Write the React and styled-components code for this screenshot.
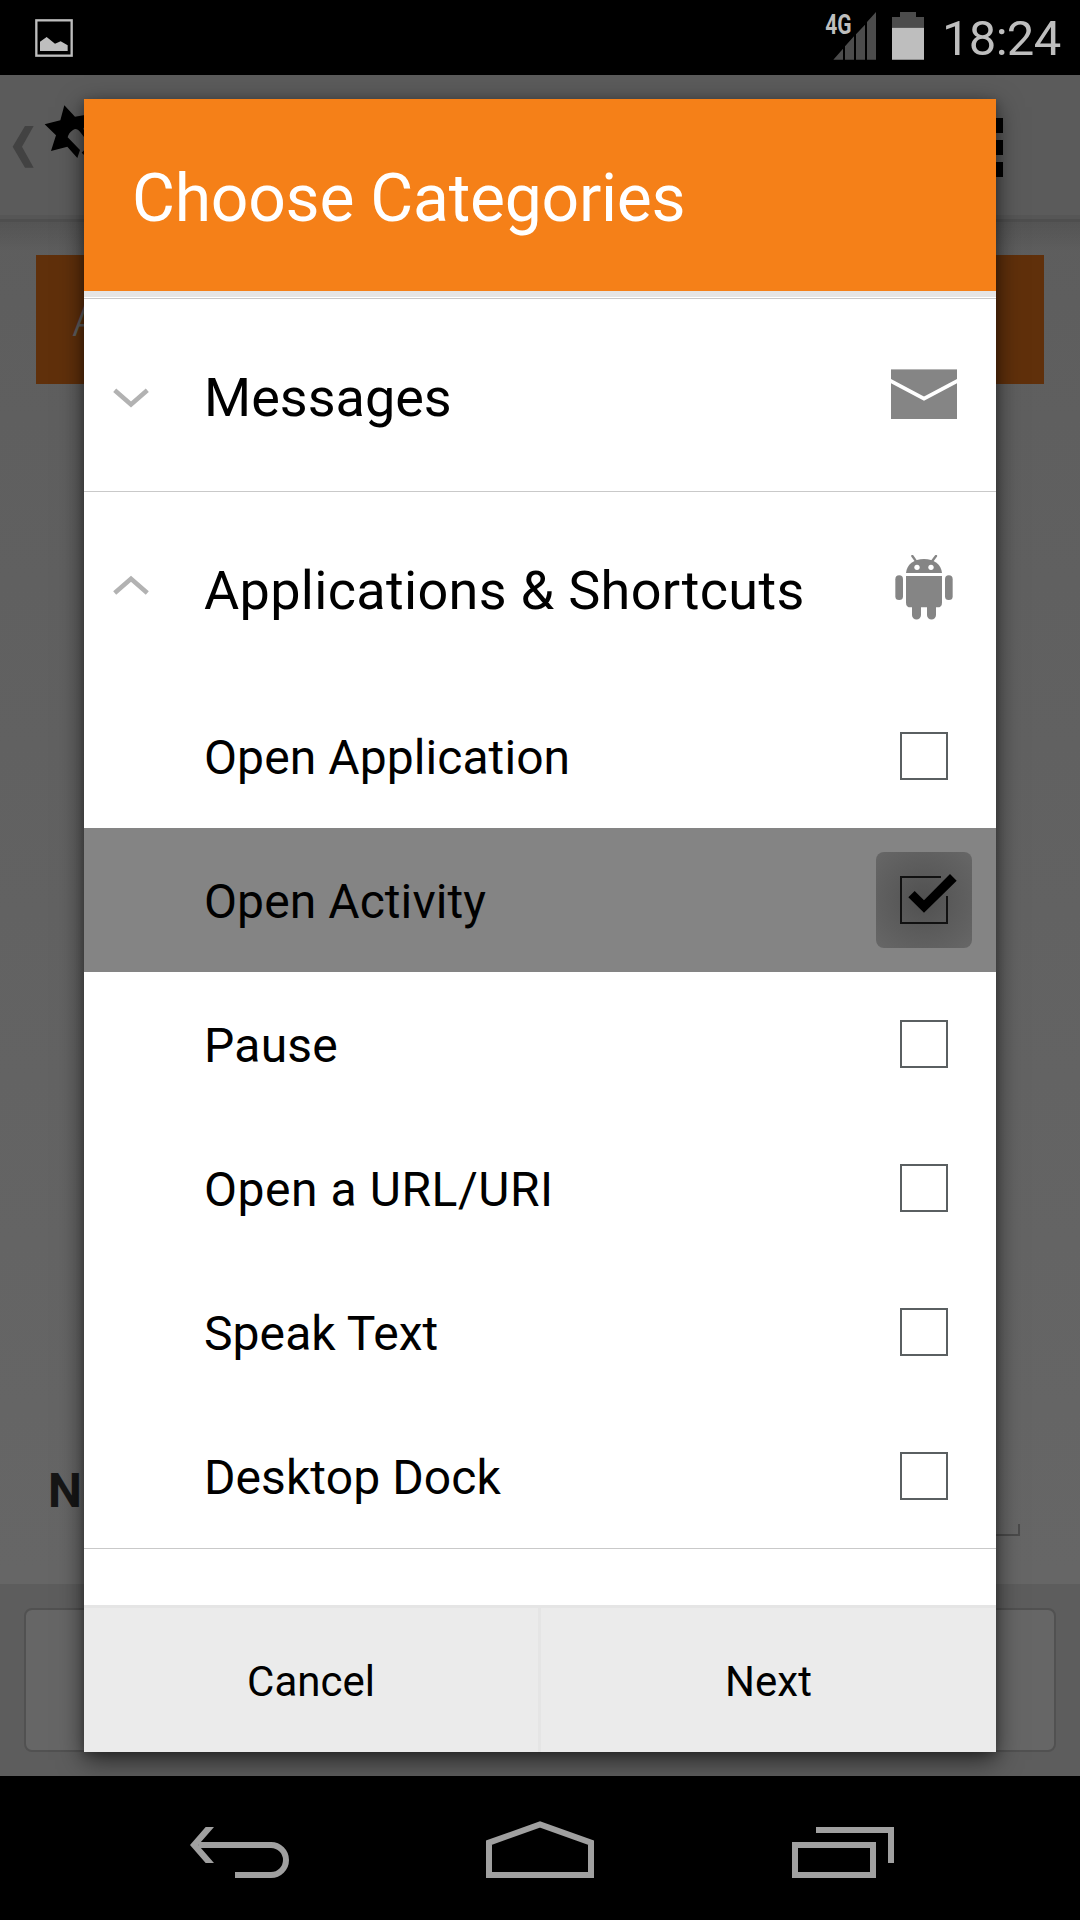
import React from "react";
import styled, { createGlobalStyle } from "styled-components";

const GlobalStyle = createGlobalStyle`
  *, *::before, *::after { box-sizing: border-box; }
  body { margin: 0; background: #000; font-family: Roboto, "Noto Sans", sans-serif; }
  button { font-family: inherit; border: 0; padding: 0; background: none; }
  svg { display: block; flex: none; }
`;

const Screen = styled.div`
  width: 1080px;
  height: 1920px;
  display: flex;
  flex-direction: column;
  background: #000;
  overflow: hidden;
`;

const StatusBar = styled.header`
  flex: none;
  height: 75px;
  padding: 0 19px 0 35px;
  display: flex;
  align-items: center;
  background: #000;
  position: relative;
  z-index: 2;
`;

const StatusSpacer = styled.div`
  flex: 1;
`;

const StatusIcon = styled.span`
  margin-left: ${(p) => p.$gap || 0}px;
  margin-top: ${(p) => p.$drop || 0}px;
  margin-bottom: ${(p) => p.$lift || 0}px;
`;

const Clock = styled.time`
  width: 119px;
  padding-right: 3px;
  margin-left: 18px;
  font-size: 49px;
  line-height: 75px;
  height: 75px;
  padding-top: 1px;
  letter-spacing: -0.7px;
  text-align: right;
  white-space: nowrap;
  color: #bebebe;
`;

const Stage = styled.main`
  flex: none;
  height: 1701px;
  position: relative;
  display: flex;
  flex-direction: column;
  background: linear-gradient(#5c5c5c, #5f5f5f 20%, #666 88%);
`;

const ActionBar = styled.div`
  flex: none;
  height: 147px;
  padding: 0 77px 7px 12px;
  display: flex;
  justify-content: space-between;
  background: linear-gradient(#5b5b5b 0 140px, #565656 140px 144px, #4e4e4e 144px 147px);
`;

const Body = styled.div`
  flex: 1;
  padding: 33px 36px 0;
  display: flex;
  flex-direction: column;
  background: linear-gradient(rgba(0, 0, 0, 0.1), rgba(0, 0, 0, 0) 30px);
`;

const AddButton = styled.button`
  height: 129px;
  padding: 0 0 0 36px;
  background: #60300b;
  color: #5f5f5f;
  font-size: 48px;
  font-weight: 300;
  line-height: 129px;
  text-align: left;
`;

const NameRow = styled.label`
  margin-top: 1063px;
  padding: 0 24px 0 12px;
  display: flex;
  align-items: flex-end;
  gap: 24px;
  height: 89px;
`;

const NameLabel = styled.span`
  width: 130px;
  height: 89px;
  line-height: 88px;
  font-size: 48px;
  font-weight: 700;
  letter-spacing: 1px;
  color: #161616;
`;

const NameField = styled.span`
  flex: 1;
  height: 12px;
  border: 2px solid #4b4b4b;
  border-top: 0;
`;

const BottomBar = styled.div`
  flex: none;
  height: 192px;
  padding: 24px;
  display: flex;
  background: #5d5d5d;
`;

const BottomCard = styled.div`
  flex: 1;
  border: 2px solid #515151;
  border-radius: 8px;
  background: #666;
`;

const Scrim = styled.div`
  position: absolute;
  inset: 0;
  display: flex;
  align-items: center;
  justify-content: center;
`;

const Dialog = styled.section`
  width: 912px;
  height: 1653px;
  display: flex;
  flex-direction: column;
  background: #fff;
  box-shadow: 0 8px 24px rgba(0, 0, 0, 0.6), 0 2px 8px rgba(0, 0, 0, 0.2);
`;

const DialogTitle = styled.h1`
  flex: none;
  margin: 0;
  height: 198px;
  padding: 4px 48px 0;
  border-bottom: 6px solid #e5e5e5;
  background: #f58018;
  color: #fff;
  font-size: 66px;
  font-weight: 400;
  line-height: 192px;
  letter-spacing: -0.25px;
`;

const List = styled.div`
  flex: 1;
  padding-top: 1px;
`;

const Category = styled.div`
  height: 193px;
  padding: 0 39px 0 29px;
  border-top: 1px solid #c9c9c9;
  display: flex;
  align-items: center;
`;

const CategoryName = styled.h2`
  flex: 1;
  margin: 6px 0 0 55px;
  font-size: 54px;
  font-weight: 400;
  line-height: 72px;
  letter-spacing: ${(p) => p.$tracking || 0}px;
  white-space: nowrap;
  color: #000;
`;

const Options = styled.div`
  border-bottom: 1px solid #c9c9c9;
`;

const Option = styled.label`
  height: 144px;
  padding: 0 24px 0 120px;
  display: flex;
  align-items: center;
  background: ${(p) => (p.$pressed ? "#848484" : "#fff")};
`;

const OptionName = styled.span`
  flex: 1;
  padding-top: 4px;
  font-size: 48px;
  line-height: 64px;
  letter-spacing: ${(p) => p.$tracking || 0.08}px;
  color: #000;
`;

const CheckTouch = styled.span`
  width: 96px;
  height: 96px;
  display: flex;
  align-items: center;
  justify-content: center;
  border-radius: 8px;
  background: ${(p) =>
    p.$pressed ? "radial-gradient(circle, #505050, #5b5b5b 45%, #676767 100%)" : "none"};
`;

const EmptyBox = styled.span`
  width: 48px;
  height: 48px;
  border: 2px solid #5a5f61;
`;

const Footer = styled.div`
  flex: none;
  height: 147px;
  display: flex;
  border-top: 3px solid #e5e5e5;
  background: #ebebeb;
`;

const FooterButton = styled.button`
  flex: ${(p) => (p.$divided ? "0 0 457px" : "1")};
  border-right: ${(p) => (p.$divided ? "3px solid #e5e5e5" : "0")};
  padding-top: 2px;
  font-size: 42px;
  color: #000;
`;

const NavBar = styled.nav`
  flex: none;
  height: 144px;
  padding: 0 90px;
  display: flex;
  background: #000;
  position: relative;
  z-index: 2;
`;

const NavButton = styled.button`
  width: 300px;
  height: 144px;
`;

const PictureIcon = () => (
  <svg width="38" height="38" viewBox="105 57 114 114">
    <rect x="109" y="61" width="106" height="106" fill="none" stroke="#bebebe" strokeWidth="7" />
    <path d="M120 153V125L140 111L165 131L182 124L203 136V153Z" fill="#bebebe" />
  </svg>
);

const SignalIcon = () => (
  <svg width="52" height="62" viewBox="135 16 156 186">
    <path
      d="M160 180L189 147V180ZM195 180V140L222 110V180ZM228 180V104L255 75V180ZM261 180V67L288 37V180Z"
      fill="#4c4c4c"
    />
    <text
      x="136"
      y="104"
      textLength="79"
      lengthAdjust="spacingAndGlyphs"
      fontFamily="Roboto, sans-serif"
      fontSize="82"
      fontWeight="700"
      fill="#bebebe"
    >
      4G
    </text>
  </svg>
);

const BatteryIcon = () => (
  <svg width="32" height="50" viewBox="336 34 96 150">
    <path d="M336 84V52H360V37H408V52H432V84Z" fill="#4c4c4c" />
    <path d="M336 84H432V180H336Z" fill="#bebebe" />
  </svg>
);

const AppLogo = () => (
  <svg width="150" height="140" viewBox="36 225 450 420">
    <path d="M38 440L75 378H101L66 440L101 503H75Z" fill="#424242" />
    <path
      d="M193 316L225 350L272 342L250 386L262 412L252 411L240 395Q230 382 218 391Q206 399 203 412L240 450L232 474L202 440L153 453L168 406L134 373L181 361Z"
      fill="#000"
    />
    <path d="M245 458L256 447L280 470L268 480Z" fill="#000" />
  </svg>
);

const OverflowIcon = () => (
  <svg width="15" height="140" viewBox="0 75 15 140">
    <path d="M0 118h15v15H0zM0 140h15v15H0zM0 162h15v15H0z" fill="#000" />
  </svg>
);

const Chevron = ({ up }) => (
  <svg width="36" height="48" viewBox="0 0 36 48">
    <path
      d={up ? "M1.7 29L18 14.8L34.3 29" : "M1.7 19.3L18 33.4L34.3 19.3"}
      fill="none"
      stroke="#b2b2b2"
      strokeWidth="4.6"
    />
  </svg>
);

const MailIcon = () => (
  <svg width="66" height="66" viewBox="0 0 66 66">
    <rect x="0" y="7.4" width="66" height="49.6" fill="#858585" />
    <path d="M-2 18L33 36.6L68 18" fill="none" stroke="#fff" strokeWidth="3.8" />
  </svg>
);

const AndroidIcon = () => (
  <svg width="66" height="66" viewBox="153 645 198 198">
    <g fill="#858585">
      <path d="M198 699C200 673 222 657 252 657S304 673 306 699Z" />
      <path d="M198 708H306V788Q306 802 292 802H212Q198 802 198 788Z" />
      <rect x="166" y="706" width="23" height="74" rx="11.5" />
      <rect x="315" y="706" width="23" height="74" rx="11.5" />
      <path d="M216 795H243V825A13.5 13.5 0 0 1 216 825ZM261 795H288V825A13.5 13.5 0 0 1 261 825Z" />
    </g>
    <path d="M229 665L217 648M275 665L288 648" stroke="#858585" strokeWidth="7" strokeLinecap="round" />
    <circle cx="231" cy="682" r="8" fill="#fff" />
    <circle cx="273" cy="682" r="8" fill="#fff" />
  </svg>
);

const CheckedIcon = () => (
  <svg width="96" height="96" viewBox="108 456 288 288">
    <path d="M303 531H183V669H321V588" fill="none" stroke="#111" strokeWidth="6" />
    <path d="M205 592L224 573L252 601L330 522L350 542L252 638Z" fill="#000" />
  </svg>
);

const BackIcon = () => (
  <svg width="300" height="144" viewBox="0 0 900 432">
    <g transform="translate(210 12)">
      <path d="M115 195H333A45 45 0 0 1 333 285H225" fill="none" stroke="#a0a0a0" strokeWidth="18" />
      <path d="M90 195L137 141H162L115 195L162 249H137Z" fill="#a0a0a0" />
    </g>
  </svg>
);

const HomeIcon = () => (
  <svg width="300" height="144" viewBox="0 0 900 432">
    <path
      transform="translate(-690 12)"
      d="M987 188L1140 133L1293 188V285H987Z"
      fill="none"
      stroke="#a0a0a0"
      strokeWidth="18"
    />
  </svg>
);

const RecentsIcon = () => (
  <svg width="300" height="144" viewBox="0 0 900 432">
    <path
      transform="translate(-270 12)"
      d="M585 195H819V285H585ZM648 150H873V249"
      fill="none"
      stroke="#a0a0a0"
      strokeWidth="18"
    />
  </svg>
);

const OPTIONS = [
  { name: "Open Application" },
  { name: "Open Activity", checked: true },
  { name: "Pause", tracking: 0.25 },
  { name: "Open a URL/URI", tracking: 0.55 },
  { name: "Speak Text" },
  { name: "Desktop Dock" },
];

export default function App() {
  return (
    <Screen>
      <GlobalStyle />
      <StatusBar>
        <StatusIcon $drop={1}><PictureIcon /></StatusIcon>
        <StatusSpacer />
        <StatusIcon $lift={2.34}><SignalIcon /></StatusIcon>
        <StatusIcon $gap={15} $lift={2.34}><BatteryIcon /></StatusIcon>
        <Clock>18:24</Clock>
      </StatusBar>
      <Stage>
        <ActionBar>
          <AppLogo />
          <OverflowIcon />
        </ActionBar>
        <Body>
          <AddButton>A</AddButton>
          <NameRow>
            <NameLabel>Na</NameLabel>
            <NameField />
          </NameRow>
        </Body>
        <BottomBar>
          <BottomCard />
        </BottomBar>
        <Scrim>
          <Dialog>
            <DialogTitle>Choose Categories</DialogTitle>
            <List>
              <Category>
                <Chevron />
                <CategoryName>Messages</CategoryName>
                <MailIcon />
              </Category>
              <Category>
                <Chevron up />
                <CategoryName $tracking={0.32}>Applications &amp; Shortcuts</CategoryName>
                <AndroidIcon />
              </Category>
              <Options>
                {OPTIONS.map((o) => (
                  <Option key={o.name} $pressed={o.checked}>
                    <OptionName $tracking={o.tracking}>{o.name}</OptionName>
                    <CheckTouch $pressed={o.checked}>
                      {o.checked ? <CheckedIcon /> : <EmptyBox />}
                    </CheckTouch>
                  </Option>
                ))}
              </Options>
            </List>
            <Footer>
              <FooterButton $divided>Cancel</FooterButton>
              <FooterButton>Next</FooterButton>
            </Footer>
          </Dialog>
        </Scrim>
      </Stage>
      <NavBar>
        <NavButton><BackIcon /></NavButton>
        <NavButton><HomeIcon /></NavButton>
        <NavButton><RecentsIcon /></NavButton>
      </NavBar>
    </Screen>
  );
}
